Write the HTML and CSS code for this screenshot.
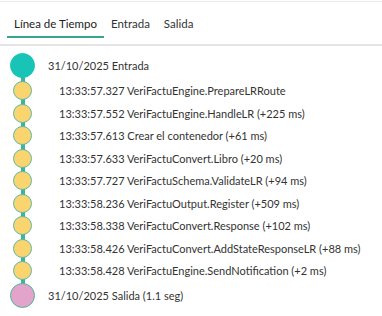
FILE: index.html
```html
<!DOCTYPE html>
<html lang="es">
<head>
<meta charset="utf-8">
<link rel="stylesheet" href="styles.css">
</head>
<body>
<div class="panel">
  <div class="tabs">
    <div class="tab active">Línea de Tiempo</div>
    <div class="tab">Entrada</div>
    <div class="tab">Salida</div>
  </div>
  <ul class="timeline">
    <li class="item big"><span class="dot start"></span><span class="label">31/10/2025 Entrada</span></li>
    <li class="item"><span class="dot"></span><span class="label">13:33:57.327 VeriFactuEngine.PrepareLRRoute</span></li>
    <li class="item"><span class="dot"></span><span class="label">13:33:57.552 VeriFactuEngine.HandleLR (+225 ms)</span></li>
    <li class="item"><span class="dot"></span><span class="label">13:33:57.613 Crear el contenedor (+61 ms)</span></li>
    <li class="item"><span class="dot"></span><span class="label">13:33:57.633 VeriFactuConvert.Libro (+20 ms)</span></li>
    <li class="item"><span class="dot"></span><span class="label">13:33:57.727 VeriFactuSchema.ValidateLR (+94 ms)</span></li>
    <li class="item"><span class="dot"></span><span class="label">13:33:58.236 VeriFactuOutput.Register (+509 ms)</span></li>
    <li class="item"><span class="dot"></span><span class="label">13:33:58.338 VeriFactuConvert.Response (+102 ms)</span></li>
    <li class="item"><span class="dot"></span><span class="label">13:33:58.426 VeriFactuConvert.AddStateResponseLR (+88 ms)</span></li>
    <li class="item"><span class="dot"></span><span class="label">13:33:58.428 VeriFactuEngine.SendNotification (+2 ms)</span></li>
    <li class="item big"><span class="dot end"></span><span class="label">31/10/2025 Salida (1.1 seg)</span></li>
  </ul>
</div>
</body>
</html>
```
FILE: styles.css
```css
html, body {
  margin: 0;
  padding: 0;
  background: #fff;
}
body {
  font-family: Lato, "Open Sans", sans-serif;
  font-size: 11px;
  color: #333;
}
.panel {
  border-top: 1px solid #ececec;
  margin-top: 1px;
}
.tabs {
  display: flex;
  padding: 0 0 0 7px;
  border-bottom: 2px solid #e4e4e4;
}
.tab {
  padding: 14px 7px 4px;
  line-height: 16px;
  font-size: 11.5px;
  color: #333;
  border-bottom: 2px solid transparent;
  margin-bottom: 6px;
}
.tab.active {
  color: #222;
  border-bottom-color: #3aa58c;
}
.timeline {
  list-style: none;
  margin: 0;
  padding: 6px 0 0 0;
  position: relative;
}
.timeline::before {
  content: "";
  position: absolute;
  left: 21px;
  width: 4px;
  top: 20px;
  bottom: 14px;
  background: #3db59a;
}
.item {
  display: flex;
  align-items: center;
  height: 22.5px;
  position: relative;
}
.item.big {
  height: 27.5px;
}
.dot {
  width: 19px;
  height: 19px;
  border-radius: 50%;
  box-sizing: border-box;
  background: #f9d46f;
  border: 1px solid #5fb8a0;
  margin-left: 13px;
  margin-right: 27px;
  flex: none;
  position: relative;
  z-index: 1;
}
.dot.start, .dot.end {
  width: 25px;
  height: 25px;
  margin-left: 10px;
  margin-right: 13px;
}
.dot.start {
  background: #17c4b6;
  border-color: #17c4b6;
}
.dot.end {
  background: #e3a4cb;
  border-color: #4fb59c;
}
.label {
  white-space: nowrap;
}
```
